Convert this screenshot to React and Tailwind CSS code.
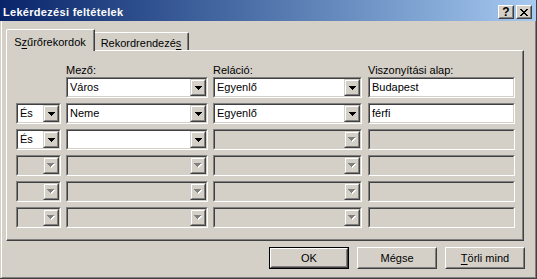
import React from 'react';

const ROWS = [
  { op: null, field: 'Város', rel: 'Egyenlő', value: 'Budapest', on: true },
  { op: 'És', field: 'Neme', rel: 'Egyenlő', value: 'férfi', on: true },
  { op: 'És', field: '', rel: '', value: '', on: 'partial' },
  { op: '', field: '', rel: '', value: '', on: false },
  { op: '', field: '', rel: '', value: '', on: false },
  { op: '', field: '', rel: '', value: '', on: false },
];

// 7x4 pixel arrow, like the classic combo box glyph
const ARROW = 'M0 0h7v1H0z M1 1h5v1H1z M2 2h3v1H2z M3 3h1v1H3z';

const Arrow = ({ disabled }) =>
  disabled ? (
    <svg width="8" height="5" viewBox="0 0 8 5" shapeRendering="crispEdges">
      <path d={ARROW} fill="#ffffff" transform="translate(1 1)" />
      <path d={ARROW} fill="#808080" />
    </svg>
  ) : (
    <svg width="7" height="4" viewBox="0 0 7 4" shapeRendering="crispEdges">
      <path d={ARROW} fill="#000000" />
    </svg>
  );

const Sunken = ({ className, white, children }) => (
  <div
    className={`box-border border border-t-[#808080] border-l-[#808080] border-r-white border-b-white ${className}`}
  >
    <div
      className={`h-full box-border border border-t-[#404040] border-l-[#404040] border-r-[#d4d0c8] border-b-[#d4d0c8] flex items-center ${
        white ? 'bg-white' : 'bg-[#d4d0c8]'
      }`}
    >
      {children}
    </div>
  </div>
);

const DropButton = ({ disabled }) => (
  <div className="w-[16px] h-full box-border border border-t-[#d4d0c8] border-l-[#d4d0c8] border-r-[#404040] border-b-[#404040]">
    <div className="h-full box-border border border-t-white border-l-white border-r-[#808080] border-b-[#808080] bg-[#d4d0c8] flex items-center justify-center">
      <Arrow disabled={disabled} />
    </div>
  </div>
);

const Combo = ({ className, value, white, disabled }) => (
  <Sunken className={className} white={white}>
    <span className="flex-1 pl-[2px] leading-[13px] whitespace-nowrap overflow-hidden">{value}</span>
    <DropButton disabled={disabled} />
  </Sunken>
);

const Field = ({ className, value, white }) => (
  <Sunken className={className} white={white}>
    <span className="flex-1 pl-[2px] leading-[13px] whitespace-nowrap overflow-hidden">{value}</span>
  </Sunken>
);

const TitleButton = ({ children }) => (
  <div className="w-[16px] h-[14px] box-border border border-t-white border-l-white border-r-[#404040] border-b-[#404040]">
    <div className="h-full box-border border border-t-[#d4d0c8] border-l-[#d4d0c8] border-r-[#808080] border-b-[#808080] bg-[#d4d0c8] flex items-center justify-center">
      {children}
    </div>
  </div>
);

const PushButton = ({ children, isDefault }) => (
  <div
    className={`w-[80px] h-[22px] box-border ${isDefault ? 'border border-black' : ''}`}
  >
    <div className="h-full box-border border border-t-white border-l-white border-r-[#404040] border-b-[#404040]">
      <div className="h-full box-border border border-t-[#d4d0c8] border-l-[#d4d0c8] border-r-[#808080] border-b-[#808080] bg-[#d4d0c8] flex items-center justify-center leading-[13px]">
        {children}
      </div>
    </div>
  </div>
);

export default function App() {
  return (
    <div className="w-[537px] h-[279px] box-border border-r border-b border-[#404040] bg-[#d4d0c8] flex flex-col text-[11px] text-black font-['Liberation_Sans',Arial,sans-serif] select-none">
      {/* Title bar */}
      <div className="h-[21px] shrink-0 flex items-start bg-linear-to-r from-[#0a246a] to-[#a6caf0] pl-[3px] pr-[4px]">
        <span className="pt-[6px] leading-[13px] font-bold text-white whitespace-nowrap tracking-[0.3px]">
          Lekérdezési feltételek
        </span>
        <div className="ml-auto mt-[5px] flex gap-[2px]">
          <TitleButton>
            <span className="font-bold text-[12px] leading-[12px] -mt-px">?</span>
          </TitleButton>
          <TitleButton>
            <svg width="8" height="7" viewBox="0 0 8 7" shapeRendering="crispEdges">
              <path
                d="M0 0h2v1H0z M6 0h2v1H6z M1 1h2v1H1z M5 1h2v1H5z M2 2h4v1H2z M3 3h2v1H3z M2 4h4v1H2z M1 5h2v1H1z M5 5h2v1H5z M0 6h2v1H0z M6 6h2v1H6z"
                fill="#000"
              />
            </svg>
          </TitleButton>
        </div>
      </div>

      {/* Body */}
      <div className="flex-1 ml-px box-border border-l border-l-white border-r border-r-[#808080] border-b border-b-[#808080] px-[4px] pt-[8px] flex flex-col">
        {/* Tabs */}
        <div className="flex items-end h-[21px]">
          <div className="relative z-10 w-[89px] h-[22px] -mb-px box-border border-t border-l border-t-white border-l-white border-r border-r-[#404040] rounded-tl-[2px] bg-[#d4d0c8]">
            <div className="h-full box-border border-r border-r-[#808080] flex justify-center pt-[6px] leading-[13px] whitespace-nowrap">
              <span>
                S<span className="underline underline-offset-2">z</span>űrőrekordok
              </span>
            </div>
          </div>
          <div className="w-[94px] h-[18px] box-border border-t border-t-white border-r border-r-[#404040] rounded-tr-[2px]">
            <div className="h-full box-border border-r border-r-[#808080] flex justify-center pt-[4px] leading-[13px] whitespace-nowrap">
              <span>
                Rekordrendezé<span className="underline underline-offset-2">s</span>
              </span>
            </div>
          </div>
        </div>

        {/* Panel */}
        <div className="w-[518px] h-[191px] box-border border border-t-white border-l-white border-r-[#404040] border-b-[#404040]">
          <div className="h-full box-border border-r border-b border-r-[#808080] border-b-[#808080] pl-[9px] pt-[12px] flex flex-col">
            <div className="flex h-[14px] leading-[14px] whitespace-nowrap">
              <div className="w-[45px]" />
              <div className="ml-[5px] w-[142px]">Mező:</div>
              <div className="ml-[5px] w-[149px]">Reláció:</div>
              <div className="ml-[6px] w-[147px]">Viszonyítási alap:</div>
            </div>
            <div className="flex flex-col gap-[5px]">
              {ROWS.map((r, i) => {
                const full = r.on === true;
                const partial = r.on === 'partial';
                return (
                  <div key={i} className="flex h-[21px]">
                    {r.op === null ? (
                      <div className="w-[45px]" />
                    ) : (
                      <Combo
                        className="w-[45px]"
                        value={r.op}
                        white={full || partial}
                        disabled={!(full || partial)}
                      />
                    )}
                    <Combo
                      className="ml-[5px] w-[142px]"
                      value={r.field}
                      white={full || partial}
                      disabled={!(full || partial)}
                    />
                    <Combo className="ml-[5px] w-[149px]" value={r.rel} white={full} disabled={!full} />
                    <Field className="ml-[6px] w-[147px]" value={r.value} white={full} />
                  </div>
                );
              })}
            </div>
          </div>
        </div>

        {/* Buttons */}
        <div className="mt-[6px] flex justify-end gap-[8px] pr-[6px]">
          <PushButton isDefault>OK</PushButton>
          <PushButton>Mégse</PushButton>
          <PushButton>
            <span>
              <span className="underline underline-offset-2">T</span>örli mind
            </span>
          </PushButton>
        </div>
      </div>
    </div>
  );
}
